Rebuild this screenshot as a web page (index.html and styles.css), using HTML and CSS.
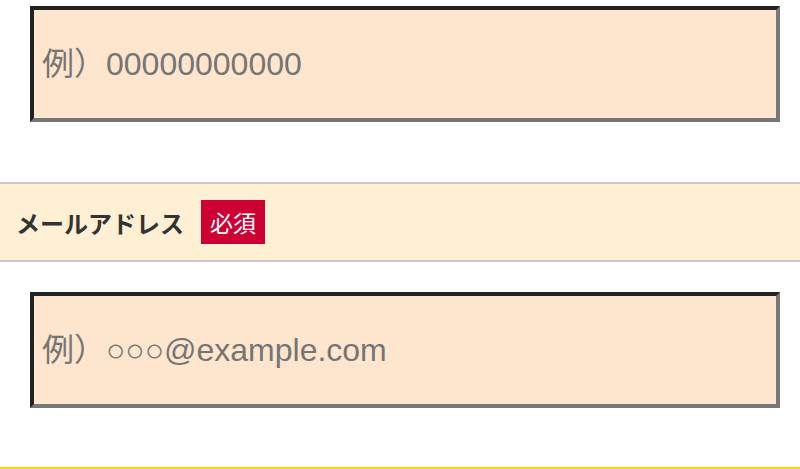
FILE: index.html
```html
<!DOCTYPE html>
<html lang="ja">
<head>
<meta charset="utf-8">
<title>フォーム</title>
<link rel="stylesheet" href="styles.css">
</head>
<body>
<form class="form">
  <div class="field">
    <input class="text-input" type="tel" placeholder="例）00000000000">
  </div>
  <div class="label-row">
    <span class="label-text">メールアドレス</span>
    <span class="badge">必須</span>
  </div>
  <div class="field field-second">
    <input class="text-input" type="email" placeholder="例）○○○@example.com">
  </div>
  <div class="next-section"></div>
</form>
</body>
</html>
```
FILE: styles.css
```css
html, body {
  margin: 0;
  padding: 0;
  background: #ffffff;
}
body {
  font-family: "Liberation Sans", "Noto Sans CJK JP", sans-serif;
  overflow: hidden;
}
.form {
  display: flex;
  flex-direction: column;
  padding-top: 6px;
}
.field {
  padding: 0 20px 0 30px;
}
.field-second {
  margin-top: 30px;
}
.text-input {
  display: block;
  box-sizing: border-box;
  width: 100%;
  height: 116px;
  margin: 0;
  padding: 0 8px;
  border-width: 4px;
  border-style: solid;
  border-color: #222222 #777777 #777777 #222222;
  border-radius: 0;
  background: #fee5cd;
  font-family: "Liberation Sans", "Noto Sans CJK JP", sans-serif;
  font-size: 32px;
  color: #333333;
  outline: none;
}
.text-input::placeholder {
  color: #757575;
  opacity: 1;
}
.label-row {
  margin-top: 60px;
  height: 76px;
  border-top: 2px solid #c8c8c8;
  border-bottom: 2px solid #c8c8c8;
  background: #fff0d4;
  display: flex;
  align-items: center;
  gap: 17px;
  padding-left: 16px;
}
.label-text {
  font-family: "Noto Sans CJK JP", sans-serif;
  font-weight: bold;
  font-size: 24px;
  color: #333333;
}
.badge {
  display: flex;
  align-items: center;
  justify-content: center;
  width: 64px;
  height: 44px;
  background: #cc0033;
  color: #ffffff;
  font-family: "Noto Sans CJK JP", sans-serif;
  font-size: 23px;
}
.next-section {
  margin-top: 59px;
  border-top: 2px solid #ffd700;
  height: 20px;
}
```
